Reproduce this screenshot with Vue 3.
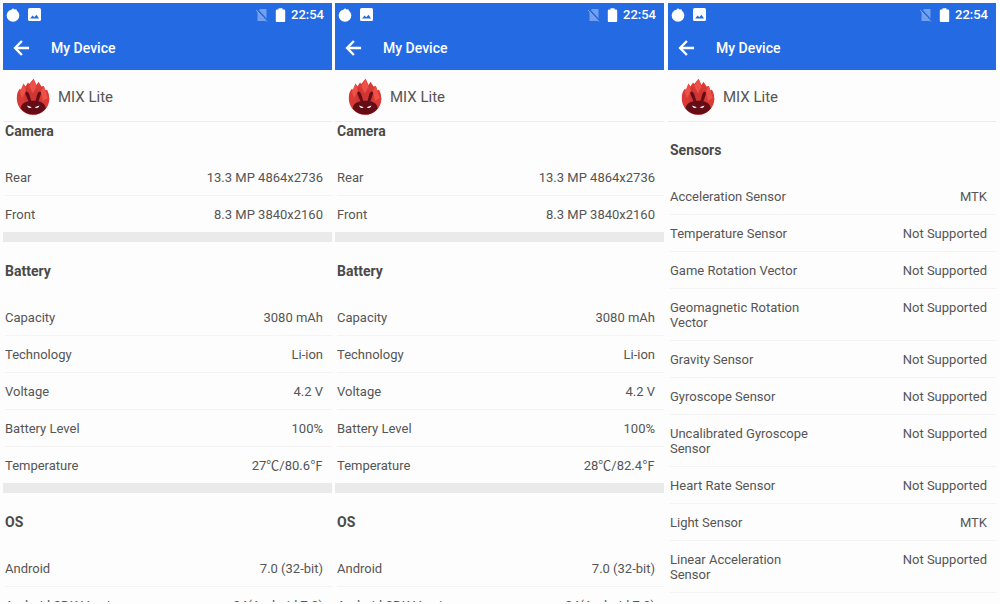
<script setup>
const battery = (temperature) => [
  ['Capacity', '3080 mAh'],
  ['Technology', 'Li-ion'],
  ['Voltage', '4.2 V'],
  ['Battery Level', '100%'],
  ['Temperature', temperature],
]

const hardware = (temperature) => [
  { title: 'Camera', rows: [['Rear', '13.3 MP 4864x2736'], ['Front', '8.3 MP 3840x2160']] },
  { title: 'Battery', rows: battery(temperature) },
  { title: 'OS', rows: [['Android', '7.0 (32-bit)'], ['Android SDK Version', '24(Android 7.0)']] },
]

const screens = [
  { scrolled: true, sections: hardware('27℃/80.6℉') },
  { scrolled: true, sections: hardware('28℃/82.4℉') },
  {
    scrolled: false,
    sections: [
      {
        title: 'Sensors',
        rows: [
          ['Acceleration Sensor', 'MTK'],
          ['Temperature Sensor', 'Not Supported'],
          ['Game Rotation Vector', 'Not Supported'],
          ['Geomagnetic Rotation Vector', 'Not Supported'],
          ['Gravity Sensor', 'Not Supported'],
          ['Gyroscope Sensor', 'Not Supported'],
          ['Uncalibrated Gyroscope Sensor', 'Not Supported'],
          ['Heart Rate Sensor', 'Not Supported'],
          ['Light Sensor', 'MTK'],
          ['Linear Acceleration Sensor', 'Not Supported'],
        ],
      },
    ],
  },
]
</script>

<template>
  <main class="page">
    <article v-for="(screen, i) in screens" :key="i" class="screen">
      <header class="top">
        <div class="status">
          <svg class="icon-app" viewBox="0 0 14 14" aria-hidden="true">
            <path fill="#fff" d="M7 .2 8.6 1.6 10.4 1.3 10.8 2.4A6.3 6.3 0 1 1 3.2 2.4L5.4 1.8Z" />
          </svg>
          <svg class="icon-image" viewBox="0 0 12 12" aria-hidden="true">
            <rect width="12" height="12" rx="1.5" fill="#fff" />
            <path fill="#246ae3" d="M2 9.6 4.2 7 5.8 8.6 7.8 6.2 10.2 9.6Z" />
          </svg>
          <span class="spacer"></span>
          <svg class="icon-sim" viewBox="0 0 12 14" aria-hidden="true">
            <path fill="#fff" fill-opacity=".36" d="M4.5 1H11V13H2V3.5Z" />
            <path stroke="#246ae3" stroke-width="2" d="M1 1 12 13" />
            <path stroke="#fff" stroke-opacity=".4" stroke-width="1" d="M.5 2 11.5 13.6" />
          </svg>
          <svg class="icon-battery" viewBox="0 0 10 14" aria-hidden="true">
            <path fill="#fff" d="M3 .3H7V1.6H8.5Q9.7 1.6 9.7 2.8V13Q9.7 14 8.7 14H1.3Q.3 14 .3 13V2.8Q.3 1.6 1.5 1.6H3Z" />
          </svg>
          <time class="clock">22:54</time>
        </div>
        <div class="bar">
          <button class="back" type="button" aria-label="Back">
            <svg viewBox="0 0 16 16" aria-hidden="true">
              <path fill="none" stroke="#fff" stroke-width="2.4" d="M15.6 8H2M8.4 1 1.6 8 8.4 15" />
            </svg>
          </button>
          <h1>My Device</h1>
        </div>
      </header>

      <div class="device">
        <svg class="logo" viewBox="0 0 34 38" aria-hidden="true">
          <path fill="#d93a36" d="M.8 20Q.8 14 4 10.5L5.2 12.5 7.5 5.5 9.5 8.5 12 4.5 13.2 6 17.6.8 20.5 7 22.5 3.8 25.5 8.5 27.8 8 29.5 12.5 31 11.5Q33.4 16 33.4 21A16.3 16.3 0 0 1 .8 20Z" />
          <path fill="#ee5148" d="M17.6 .8 20.5 8.5 17 15 13.2 8Z M7.5 5.5 10 13 6 20 3.8 14Z M27.8 8 31.8 20 27 23 25 13Z" />
          <path fill="#b82b2c" d="M11 9 14 14 17 16 21 11 23 15 25 25H8L9 14Z" opacity=".3" />
          <path fill="#650d16" d="M4.6 30.5Q5 24.5 12.5 23.2L9.6 16.5Q8.8 13.5 10.4 13.4 12 13.3 13.2 16L15.2 22.8H19.6L21.3 16Q22.3 13.2 23.8 13.4 25.5 13.6 24.8 16.5L22.4 23.2Q29.2 24.8 29.8 30.5A16.3 16.3 0 0 1 4.6 30.5Z" />
          <path fill="#fff" d="M11 27.4 15.8 29.2Q13.6 30.6 12 29.2Z M23.5 27.4 18.7 29.2Q20.9 30.6 22.5 29.2Z" />
        </svg>
        <h2>MIX Lite</h2>
      </div>

      <div class="viewport">
        <div class="content" :class="{ scrolled: screen.scrolled }">
          <section v-for="section in screen.sections" :key="section.title" class="section">
            <table>
              <caption>{{ section.title }}</caption>
              <colgroup>
                <col class="label-column" />
                <col />
              </colgroup>
              <tbody>
                <tr v-for="[label, value] in section.rows" :key="label">
                  <th scope="row">{{ label }}</th>
                  <td>{{ value }}</td>
                </tr>
              </tbody>
            </table>
          </section>
        </div>
      </div>
    </article>
  </main>
</template>

<style>
body {
  background: #fdfdfd;
}
</style>

<style scoped>
.page {
  box-sizing: border-box;
  height: 100vh;
  padding: 3px 4px 2px 3px;
  display: grid;
  grid-template-columns: repeat(3, minmax(0, 1fr));
  gap: 3px;
  overflow: hidden;
  font-family: Roboto, "Noto Sans CJK SC", sans-serif;
  font-size: 13px;
  line-height: 15px;
  color: #555;
}
.screen {
  display: flex;
  flex-direction: column;
  min-width: 0;
  min-height: 0;
}
.screen:last-child {
  margin-left: 1px;
}
.top {
  background: #246ae3;
  color: #fff;
}
.status {
  display: flex;
  align-items: center;
  height: 23px;
  padding: 0 8px 0 3px;
}
.icon-app {
  width: 14px;
  height: 14px;
  margin-right: 8px;
}
.icon-image {
  width: 13px;
  height: 13px;
}
.spacer {
  flex: 1;
}
.icon-sim {
  width: 13px;
  height: 14px;
  margin-right: 7px;
}
.icon-battery {
  width: 11px;
  height: 14px;
  margin-right: 5px;
}
.clock {
  font-size: 13px;
  font-weight: 500;
}
.bar {
  display: flex;
  align-items: center;
  height: 44px;
  padding-left: 10px;
}
.back {
  display: flex;
  margin: 0 21px 0 0;
  padding: 0;
  border: 0;
  background: none;
}
.back svg {
  width: 17px;
  height: 16px;
}
h1 {
  margin: 0;
  font-size: 14px;
  font-weight: 500;
}
.device {
  display: flex;
  align-items: center;
  gap: 8px;
  height: 49px;
  padding: 2px 0 0 13px;
  border-bottom: 1px solid #ececec;
}
.logo {
  width: 34px;
  height: 38px;
}
h2 {
  margin: 0;
  font-size: 15px;
  font-weight: 400;
  line-height: 20px;
}
.viewport {
  flex: 1;
  min-height: 0;
  overflow: hidden;
}
.content {
  margin-top: -1px;
}
.content.scrolled {
  margin-top: -20px;
}
.section + .section {
  border-top: 10px solid #eaeaea;
}
.section {
  padding-left: 2px;
}
table {
  width: 100%;
  table-layout: fixed;
  border-spacing: 0;
}
.label-column {
  width: 45%;
}
caption {
  padding: 22px 0 20px;
  text-align: left;
  font-size: 14px;
  font-weight: 700;
  color: #4a4a4a;
}
th,
td {
  padding: 11px 0 10px;
  border-bottom: 1px solid #f3f3f3;
  vertical-align: top;
  font-weight: 400;
  text-align: left;
}
td {
  padding-right: 9px;
  text-align: right;
}
.section:not(:last-child) tr:last-child > * {
  border-bottom: 0;
}
</style>
